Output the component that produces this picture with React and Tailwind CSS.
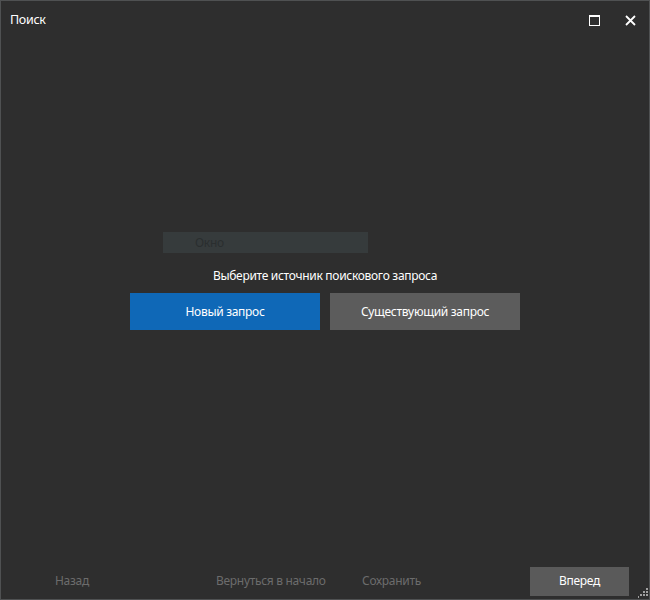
const font = { fontFamily: '"Segoe UI", "Noto Sans", "Open Sans", sans-serif' };

const MaximizeIcon = () => (
  <svg width="11" height="11" viewBox="0 0 11 11" fill="none">
    <rect x="0.5" y="0.5" width="10" height="10" stroke="#ffffff" strokeWidth="1" />
    <rect x="0" y="0" width="11" height="2" fill="#ffffff" />
  </svg>
);

const CloseIcon = () => (
  <svg width="11" height="11" viewBox="0 0 11 11" fill="none">
    <path d="M1 1L10 10M10 1L1 10" stroke="#ffffff" strokeWidth="1.8" />
  </svg>
);

const Grip = () => (
  <svg width="10" height="10" viewBox="0 0 10 10">
    <rect x="8" y="0" width="2" height="2" fill="#a0a0a0" />
    <rect x="5" y="3" width="2" height="2" fill="#a0a0a0" />
    <rect x="8" y="3" width="2" height="2" fill="#a0a0a0" />
    <rect x="2" y="6" width="2" height="2" fill="#a0a0a0" />
    <rect x="5" y="6" width="2" height="2" fill="#a0a0a0" />
    <rect x="8" y="6" width="2" height="2" fill="#a0a0a0" />
    <rect x="0" y="8" width="1" height="2" fill="#a0a0a0" />
  </svg>
);

const App = () => {
  return (
    <div
      style={font}
      className="w-[650px] h-[600px] bg-[#2e2e2e] border border-[#4f5152] flex flex-col text-white relative tracking-[-0.3px]"
    >
      <div className="h-[38px] flex items-center pl-[9px] pr-[13px] shrink-0">
        <p className="text-[12.5px] flex-1">Поиск</p>
        <div className="flex items-center gap-[25px]">
          <MaximizeIcon />
          <CloseIcon />
        </div>
      </div>

      <div className="flex-1 flex flex-col items-center pt-[193px]">
        <div className="w-[390px] flex flex-col">
          <div className="ml-[33px] w-[205px] h-[21px] bg-[#363b3c] flex items-center pl-[32px]">
            <p className="text-[12px] text-[#2a2e2f]">Окно</p>
          </div>
          <p className="text-[12px] text-center mt-[14px] leading-[18px]">
            Выберите источник поискового запроса
          </p>
          <div className="flex gap-[10px] mt-[8px]">
            <button className="w-[190px] h-[37px] bg-[#0f68b7] text-[12px] text-white">
              Новый запрос
            </button>
            <button className="w-[190px] h-[37px] bg-[#5c5c5c] text-[12px] text-white">
              Существующий запрос
            </button>
          </div>
        </div>
      </div>

      <div className="h-[38px] flex items-center shrink-0 pt-[2px] text-[12px] text-[#6c6c6c]">
        <p className="ml-[54px] w-[161px]">Назад</p>
        <p className="w-[146px]">Вернуться в начало</p>
        <p className="w-[168px]">Сохранить</p>
        <button className="w-[99px] h-[29px] bg-[#5a5a5a] text-white text-[12px]">Вперед</button>
      </div>

      <div className="absolute right-[1px] bottom-[1px]">
        <Grip />
      </div>
    </div>
  );
};

export default App;
